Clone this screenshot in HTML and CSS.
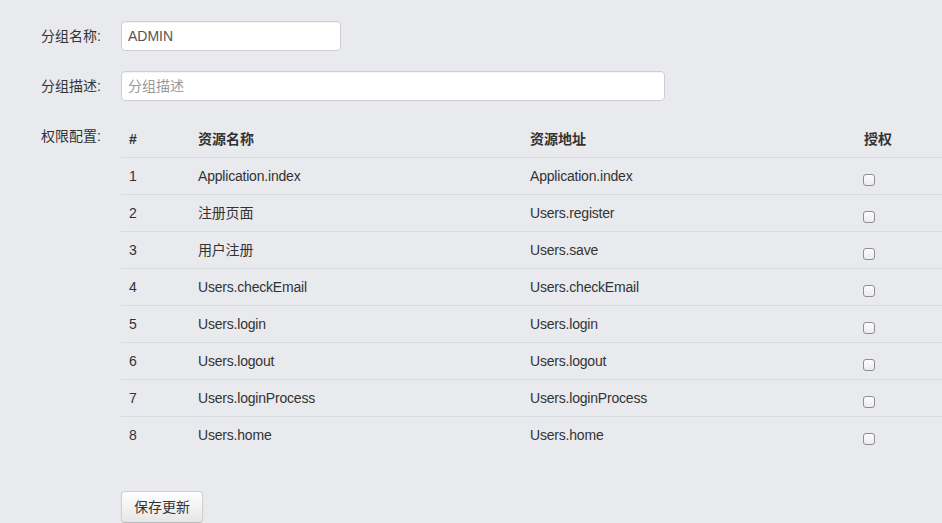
FILE: index.html
```html
<!DOCTYPE html>
<html>
<head>
<meta charset="utf-8">
<link rel="stylesheet" href="styles.css">
</head>
<body>
<form class="form">
  <div class="row">
    <label class="label">分组名称:</label>
    <input class="input input-short" type="text" value="ADMIN">
  </div>
  <div class="row">
    <label class="label">分组描述:</label>
    <input class="input input-long" type="text" placeholder="分组描述">
  </div>
  <div class="row row-table">
    <label class="label label-table">权限配置:</label>
    <div class="table-wrap">
      <table class="table">
        <colgroup>
          <col class="c1"><col class="c2"><col class="c3"><col class="c4">
        </colgroup>
        <thead>
          <tr><th>#</th><th>资源名称</th><th>资源地址</th><th>授权</th></tr>
        </thead>
        <tbody>
          <tr><td>1</td><td>Application.index</td><td>Application.index</td><td><input class="check" type="checkbox"></td></tr>
          <tr><td>2</td><td>注册页面</td><td>Users.register</td><td><input class="check" type="checkbox"></td></tr>
          <tr><td>3</td><td>用户注册</td><td>Users.save</td><td><input class="check" type="checkbox"></td></tr>
          <tr><td>4</td><td>Users.checkEmail</td><td>Users.checkEmail</td><td><input class="check" type="checkbox"></td></tr>
          <tr><td>5</td><td>Users.login</td><td>Users.login</td><td><input class="check" type="checkbox"></td></tr>
          <tr><td>6</td><td>Users.logout</td><td>Users.logout</td><td><input class="check" type="checkbox"></td></tr>
          <tr><td>7</td><td>Users.loginProcess</td><td>Users.loginProcess</td><td><input class="check" type="checkbox"></td></tr>
          <tr><td>8</td><td>Users.home</td><td>Users.home</td><td><input class="check" type="checkbox"></td></tr>
        </tbody>
      </table>
    </div>
  </div>
  <div class="actions">
    <button class="btn" type="button">保存更新</button>
  </div>
</form>
</body>
</html>
```
FILE: styles.css
```css
html, body {
  margin: 0;
  padding: 0;
  background: #e9eaed;
  overflow: hidden;
}
body {
  font-family: "Liberation Sans", "Noto Sans CJK SC", sans-serif;
  font-size: 14px;
  line-height: 20px;
  color: #333;
}
.form {
  padding-top: 21px;
}
.row {
  display: grid;
  grid-template-columns: 101px 1fr;
  column-gap: 20px;
  align-items: center;
  margin-bottom: 20px;
}
.row-table {
  align-items: start;
  margin-bottom: 0;
}
.label {
  text-align: right;
  color: #333;
}
.label-table {
  padding-top: 5px;
}
.input {
  box-sizing: border-box;
  height: 30px;
  padding: 4px 6px;
  border: 1px solid #cfcfd2;
  border-radius: 4px;
  background: #fff;
  font: inherit;
  color: #555;
  box-shadow: inset 0 1px 1px rgba(0,0,0,0.05);
  outline: none;
}
.input::placeholder { color: #999; }
.input-short { width: 220px; }
.input-long { width: 544px; }
.table-wrap {
  overflow: hidden;
}
.table {
  table-layout: fixed;
  width: 860px;
  border-collapse: collapse;
}
.c1 { width: 69px; }
.c2 { width: 332px; }
.c3 { width: 334px; }
.c4 { width: 125px; }
.table th, .table td {
  padding: 8px;
  text-align: left;
  vertical-align: top;
  line-height: 20px;
}
.table td {
  letter-spacing: -0.2px;
}
.table th {
  font-weight: bold;
}
.table tbody tr td {
  border-top: 1px solid #dadbde;
}
.table thead th {
  height: 20px;
  padding-bottom: 8px;
}
.check {
  appearance: none;
  -webkit-appearance: none;
  box-sizing: border-box;
  width: 12px;
  height: 12px;
  margin: 8px 0 0 -1px;
  border: 1px solid #8e8e90;
  border-radius: 3px;
  background: linear-gradient(#fdfdfd, #ececec);
  vertical-align: top;
}
.actions {
  padding: 38px 0 0 121px;
}
.btn {
  box-sizing: border-box;
  height: 32px;
  padding: 4px 12px;
  font: inherit;
  color: #333;
  border: 1px solid #cfcfcf;
  border-bottom-color: #b9b9b9;
  border-radius: 4px;
  background: linear-gradient(#ffffff, #e6e6e6);
  box-shadow: inset 0 1px 0 rgba(255,255,255,0.2), 0 1px 2px rgba(0,0,0,0.05);
}
```
